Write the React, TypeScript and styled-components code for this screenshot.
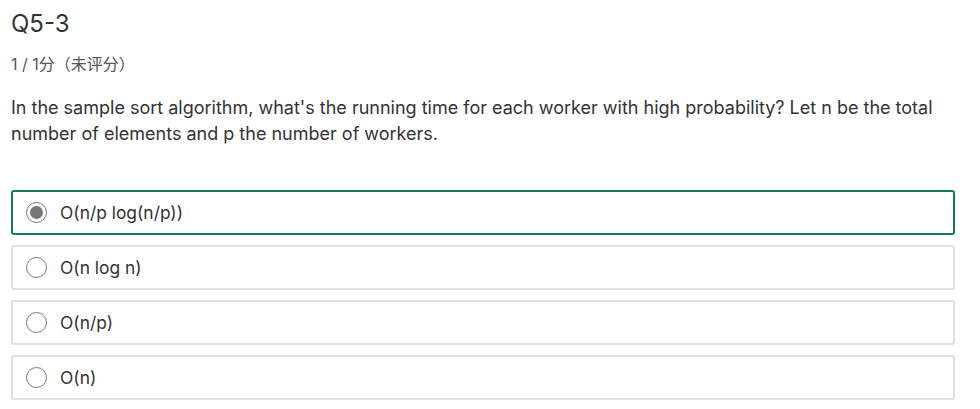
import React from "react";
import styled, { createGlobalStyle } from "styled-components";

const Global = createGlobalStyle`
  html, body { margin: 0; padding: 0; background: #fff; }
  body { font-family: Inter, "Noto Sans CJK SC", sans-serif; color: #333; }
`;

const Page = styled.div`
  padding: 6px 25px 0 11px;
  display: flex;
  flex-direction: column;
`;

const Title = styled.h2`
  margin: 0;
  font-size: 24px;
  font-weight: 400;
  line-height: 36px;
  color: #333;
`;

const Score = styled.div`
  margin-top: 11px;
  font-size: 16px;
  line-height: 22px;
  color: #555;
`;

const Question = styled.p`
  margin: 20px 0 0;
  font-size: 18px;
  line-height: 26px;
  color: #333;
`;

const Options = styled.div`
  margin-top: 43px;
  display: flex;
  flex-direction: column;
  gap: 10px;
`;

const Option = styled.label<{ $selected?: boolean }>`
  display: flex;
  align-items: center;
  gap: 13px;
  height: 45px;
  box-sizing: border-box;
  padding: 0 13px;
  border: 2px solid ${(p) => (p.$selected ? "#167a52" : "#e0e0e0")};
  border-radius: 3px;
  font-size: 17.4px;
  color: #333;
`;

const Radio = styled.span<{ $checked?: boolean }>`
  width: 21px;
  height: 21px;
  box-sizing: border-box;
  border-radius: 50%;
  border: 1px solid #777;
  display: flex;
  align-items: center;
  justify-content: center;
  &::after {
    content: "";
    width: 13px;
    height: 13px;
    border-radius: 50%;
    background: #767676;
    display: ${(p) => (p.$checked ? "block" : "none")};
  }
`;

const options = ["O(n/p log(n/p))", "O(n log n)", "O(n/p)", "O(n)"];

export default function App() {
  return (
    <Page>
      <Global />
      <Title>Q5-3</Title>
      <Score>1 / 1分（未评分）</Score>
      <Question>
        In the sample sort algorithm, what's the running time for each worker with high probability? Let n be the total number of elements and p the number of workers.
      </Question>
      <Options>
        {options.map((o, i) => (
          <Option key={o} $selected={i === 0}>
            <Radio $checked={i === 0} />
            {o}
          </Option>
        ))}
      </Options>
    </Page>
  );
}
